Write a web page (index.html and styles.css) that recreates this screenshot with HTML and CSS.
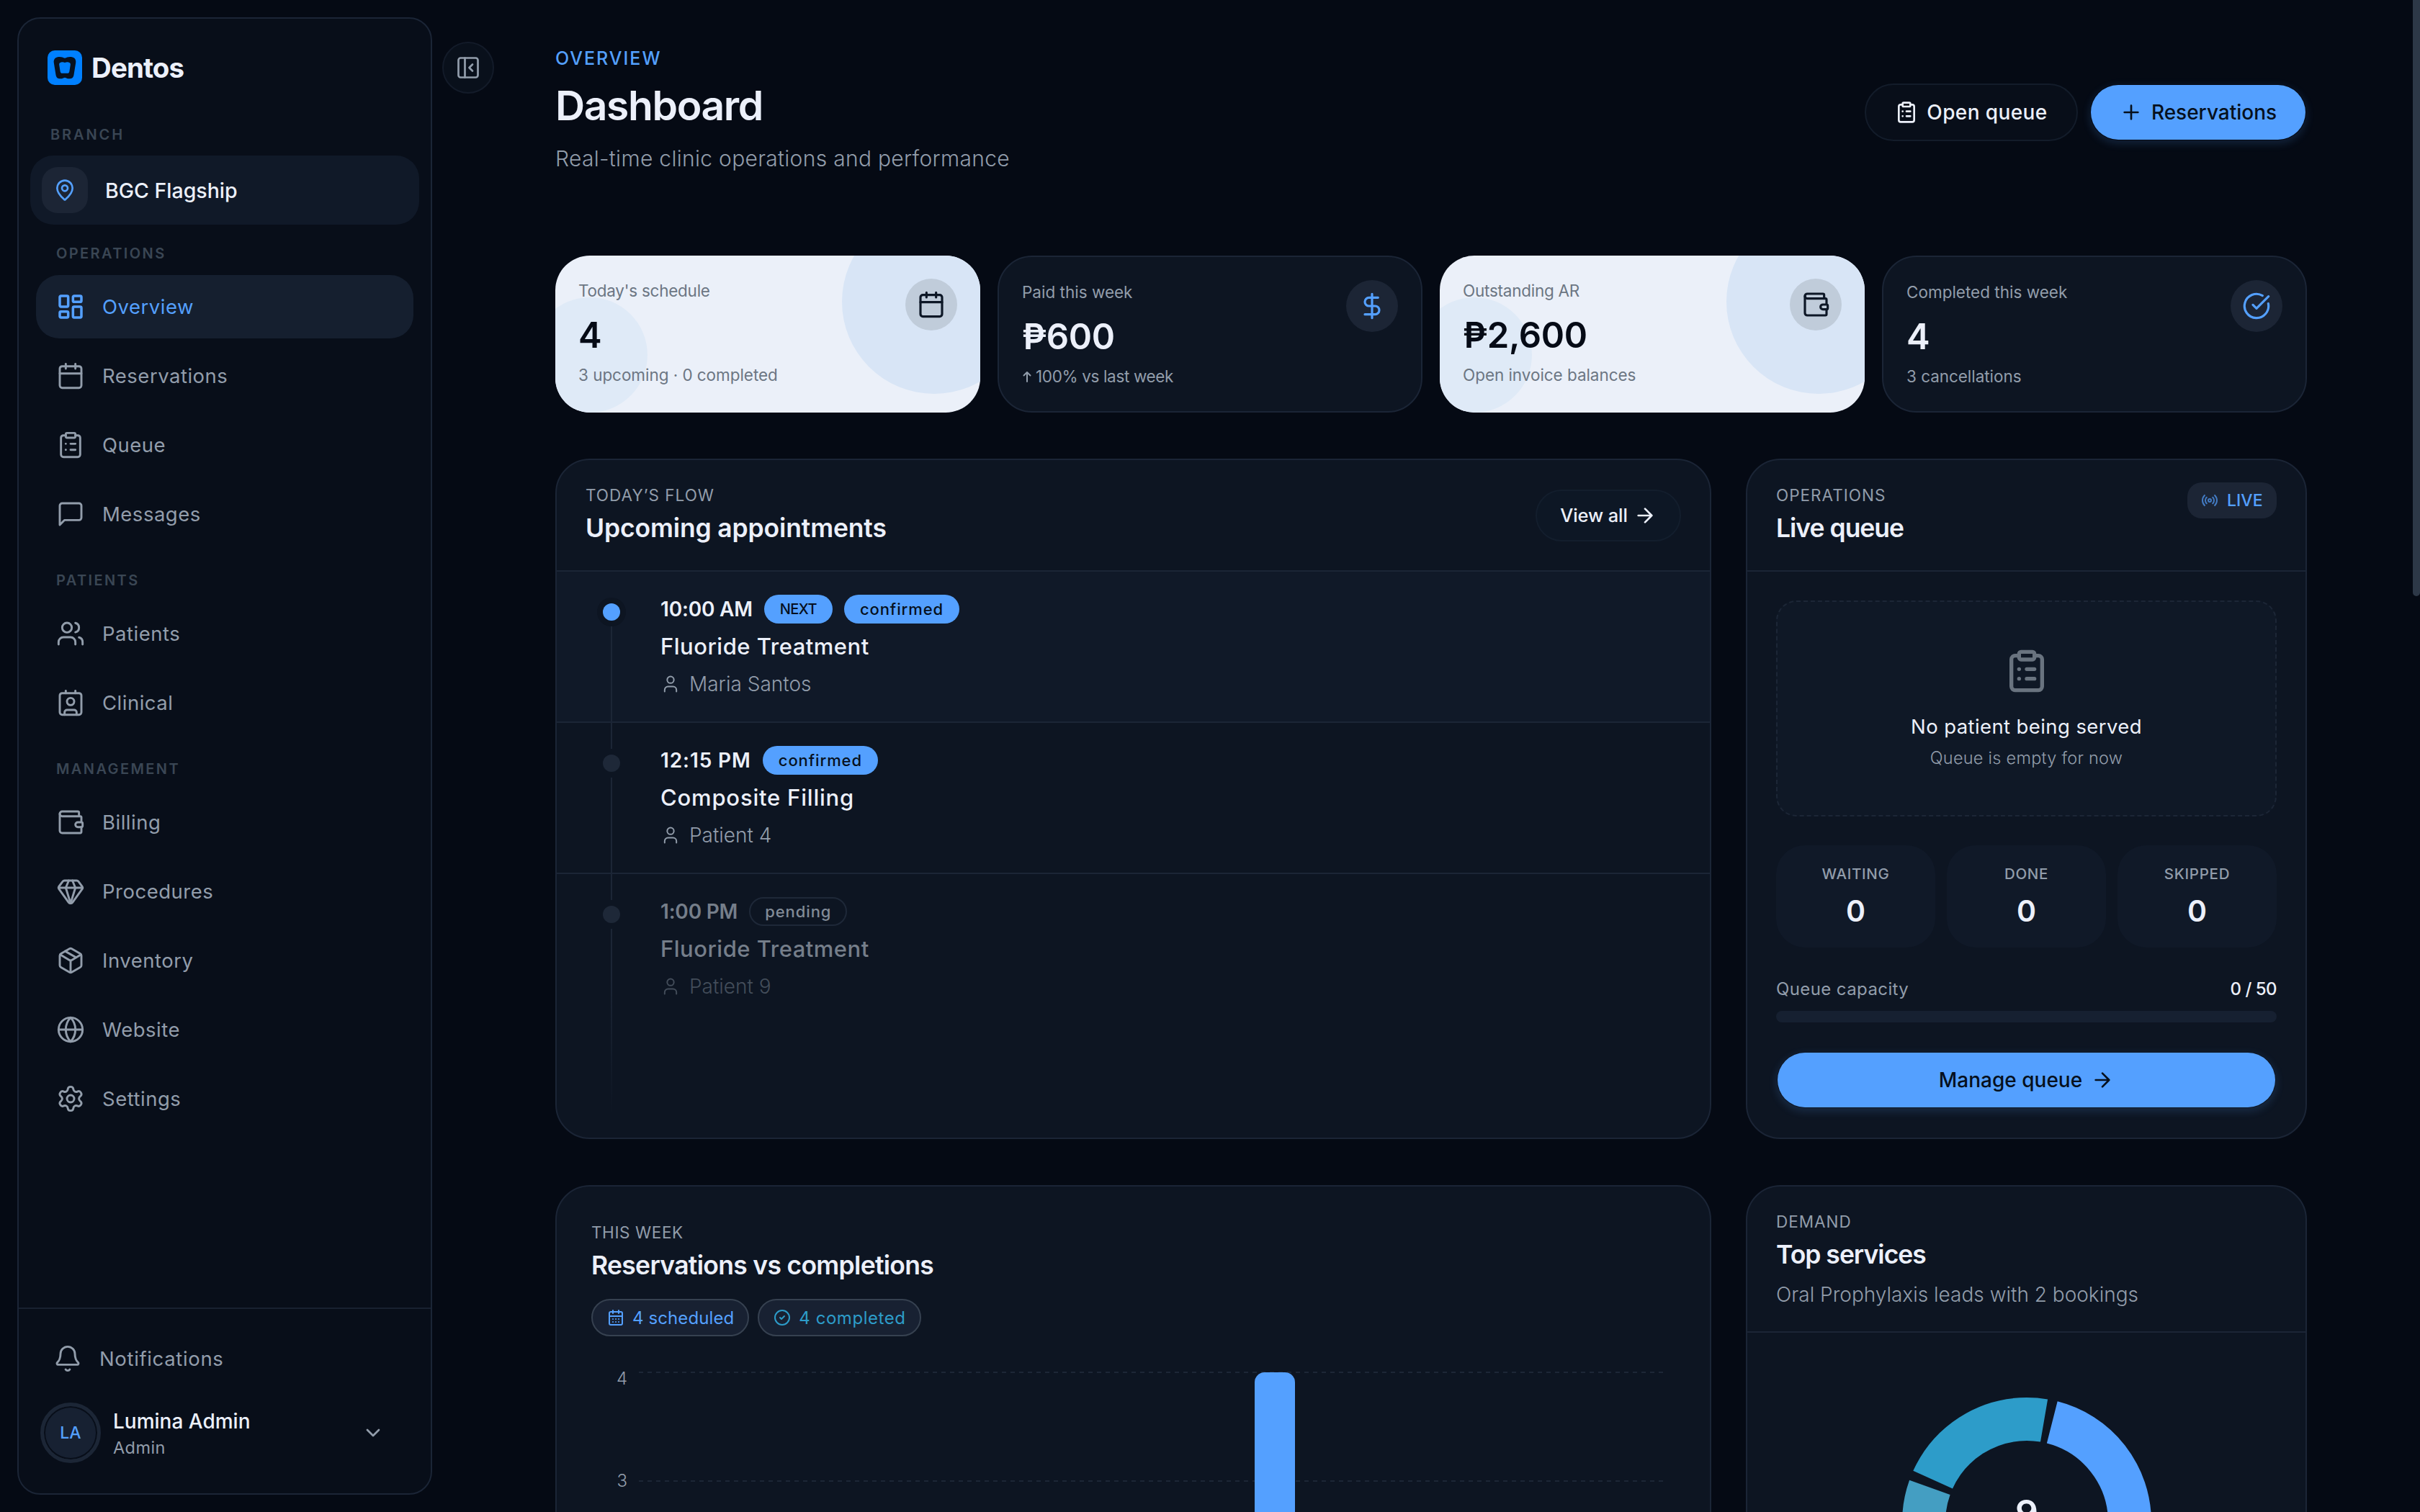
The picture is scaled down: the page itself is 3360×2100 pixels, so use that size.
FILE: index.html
```html
<!DOCTYPE html>
<html lang="en">
<head>
    <meta charset="UTF-8">
    <meta name="viewport" content="width=device-width, initial-scale=1.0">
    <title>Dentos - Dashboard</title>
    <link rel="stylesheet" href="styles.css">
</head>
<body>
    <!-- Icon sprite -->
    <svg class="sprite" aria-hidden="true">
        <symbol id="i-dashboard" viewBox="0 0 24 24"><rect x="3" y="3" width="7" height="9" rx="1"/><rect x="14" y="3" width="7" height="5" rx="1"/><rect x="14" y="12" width="7" height="9" rx="1"/><rect x="3" y="16" width="7" height="5" rx="1"/></symbol>
        <symbol id="i-calendar" viewBox="0 0 24 24"><path d="M8 2v4M16 2v4M3 10h18"/><rect x="3" y="4" width="18" height="18" rx="2"/></symbol>
        <symbol id="i-calendar-days" viewBox="0 0 24 24"><path d="M8 2v4M16 2v4M3 10h18M8 14h.01M12 14h.01M16 14h.01M8 18h.01M12 18h.01M16 18h.01"/><rect x="3" y="4" width="18" height="18" rx="2"/></symbol>
        <symbol id="i-clipboard" viewBox="0 0 24 24"><rect x="8" y="2" width="8" height="4" rx="1"/><path d="M16 4h2a2 2 0 0 1 2 2v14a2 2 0 0 1-2 2H6a2 2 0 0 1-2-2V6a2 2 0 0 1 2-2h2M12 11h4M12 16h4M8 11h.01M8 16h.01"/></symbol>
        <symbol id="i-message" viewBox="0 0 24 24"><path d="M21 15a2 2 0 0 1-2 2H7l-4 4V5a2 2 0 0 1 2-2h14a2 2 0 0 1 2 2z"/></symbol>
        <symbol id="i-users" viewBox="0 0 24 24"><path d="M16 21v-2a4 4 0 0 0-4-4H6a4 4 0 0 0-4 4v2M22 21v-2a4 4 0 0 0-3-3.87M16 3.13a4 4 0 0 1 0 7.75"/><circle cx="9" cy="7" r="4"/></symbol>
        <symbol id="i-contact" viewBox="0 0 24 24"><path d="M16 2v2M7 22v-2a2 2 0 0 1 2-2h6a2 2 0 0 1 2 2v2M8 2v2"/><circle cx="12" cy="11" r="3"/><rect x="3" y="4" width="18" height="18" rx="2"/></symbol>
        <symbol id="i-wallet" viewBox="0 0 24 24"><path d="M19 7V4a1 1 0 0 0-1-1H5a2 2 0 0 0 0 4h15a1 1 0 0 1 1 1v4h-3a2 2 0 0 0 0 4h3a1 1 0 0 0 1-1v-2a1 1 0 0 0-1-1"/><path d="M3 5v14a2 2 0 0 0 2 2h15a1 1 0 0 0 1-1v-4"/></symbol>
        <symbol id="i-gem" viewBox="0 0 24 24"><path d="M10.5 3 8 9l4 13 4-13-2.5-6"/><path d="M17 3a2 2 0 0 1 1.6.8l3 4a2 2 0 0 1 .013 2.382l-7.99 10.986a2 2 0 0 1-3.247 0l-7.99-10.986A2 2 0 0 1 2.4 7.8l2.998-3.997A2 2 0 0 1 7 3zM2 9h20"/></symbol>
        <symbol id="i-package" viewBox="0 0 24 24"><path d="M11 21.73a2 2 0 0 0 2 0l7-4A2 2 0 0 0 21 16V8a2 2 0 0 0-1-1.73l-7-4a2 2 0 0 0-2 0l-7 4A2 2 0 0 0 3 8v8a2 2 0 0 0 1 1.73zM12 22V12"/><path d="m3.3 7 7.703 4.734a2 2 0 0 0 1.994 0L20.7 7M7.5 4.27l9 5.15"/></symbol>
        <symbol id="i-globe" viewBox="0 0 24 24"><circle cx="12" cy="12" r="10"/><path d="M12 2a14.5 14.5 0 0 0 0 20 14.5 14.5 0 0 0 0-20M2 12h20"/></symbol>
        <symbol id="i-settings" viewBox="0 0 24 24"><path d="M9.671 4.136a2.34 2.34 0 0 1 4.659 0 2.34 2.34 0 0 0 3.319 1.915 2.34 2.34 0 0 1 2.33 4.033 2.34 2.34 0 0 0 0 3.831 2.34 2.34 0 0 1-2.33 4.033 2.34 2.34 0 0 0-3.319 1.915 2.34 2.34 0 0 1-4.659 0 2.34 2.34 0 0 0-3.32-1.915 2.34 2.34 0 0 1-2.33-4.033 2.34 2.34 0 0 0 0-3.831A2.34 2.34 0 0 1 6.35 6.051a2.34 2.34 0 0 0 3.319-1.915"/><circle cx="12" cy="12" r="3"/></symbol>
        <symbol id="i-bell" viewBox="0 0 24 24"><path d="M10.268 21a2 2 0 0 0 3.464 0M3.262 15.326A1 1 0 0 0 4 17h16a1 1 0 0 0 .74-1.673C19.41 13.956 18 12.499 18 8A6 6 0 0 0 6 8c0 4.499-1.411 5.956-2.738 7.326"/></symbol>
        <symbol id="i-pin" viewBox="0 0 24 24"><path d="M20 10c0 4.993-5.539 10.193-7.399 11.799a1 1 0 0 1-1.202 0C9.539 20.193 4 14.993 4 10a8 8 0 0 1 16 0"/><circle cx="12" cy="10" r="3"/></symbol>
        <symbol id="i-chevron" viewBox="0 0 24 24"><path d="m6 9 6 6 6-6"/></symbol>
        <symbol id="i-panel" viewBox="0 0 24 24"><rect x="3" y="3" width="18" height="18" rx="2"/><path d="M9 3v18M16 15l-3-3 3-3"/></symbol>
        <symbol id="i-plus" viewBox="0 0 24 24"><path d="M5 12h14M12 5v14"/></symbol>
        <symbol id="i-dollar" viewBox="0 0 24 24"><path d="M12 2v20M17 5H9.5a3.5 3.5 0 0 0 0 7h5a3.5 3.5 0 0 1 0 7H6"/></symbol>
        <symbol id="i-check-big" viewBox="0 0 24 24"><path d="M21.801 10A10 10 0 1 1 17 3.335M9 11l3 3L22 4"/></symbol>
        <symbol id="i-check" viewBox="0 0 24 24"><circle cx="12" cy="12" r="10"/><path d="m9 12 2 2 4-4"/></symbol>
        <symbol id="i-arrow" viewBox="0 0 24 24"><path d="M5 12h14M12 5l7 7-7 7"/></symbol>
        <symbol id="i-user" viewBox="0 0 24 24"><path d="M19 21v-2a4 4 0 0 0-4-4H9a4 4 0 0 0-4 4v2"/><circle cx="12" cy="7" r="4"/></symbol>
        <symbol id="i-radio" viewBox="0 0 24 24"><path d="M16.247 7.761a6 6 0 0 1 0 8.478M19.075 4.933a10 10 0 0 1 0 14.134M4.925 19.067a10 10 0 0 1 0-14.134M7.753 16.239a6 6 0 0 1 0-8.478"/><circle cx="12" cy="12" r="2"/></symbol>
    </svg>

    <div class="app">
        <aside class="sidebar">
            <div class="brand">
                <svg class="brand-mark" viewBox="0 0 48 48">
                    <rect width="48" height="48" rx="10" fill="#0080ff"/>
                    <path d="M14 9.2c4-.8 7 .2 10 1.6 3-1.4 6-2.4 10-1.6 4 .8 5.800 4 5.200 8L36.500 34c-.8 4-2.500 5.300-6.500 5.300-3 0-3.500-1-6-1.600-2.500.6-3 1.600-6 1.600-4 0-5.700-1.300-6.500-5.300L8.800 17.200c-.6-4 1.200-7.200 5.200-8z" fill="#07111f"/>
                    <path d="M19 16.500c2-.6 3.500 0 5 .5 1.500-.5 3-1.100 5-.5 2.300.4 3.100 1.500 2.800 3.500l-1.400 9c-.3 2-1.200 2.800-3.200 2.800h-6.400c-2 0-2.900-.8-3.200-2.800l-1.400-9c-.3-2 .5-3.100 2.800-3.500z" fill="#0080ff"/>
                </svg>
                <span class="brand-name">Dentos</span>
            </div>

            <div class="branch-label">Branch</div>
            <div class="branch">
                <span class="branch-icon"><svg class="icon"><use href="#i-pin"/></svg></span>
                <span class="branch-name">BGC Flagship</span>
            </div>

            <nav>
                <div class="nav-group">
                    <div class="nav-label">Operations</div>
                    <a class="nav-item active"><svg class="icon"><use href="#i-dashboard"/></svg>Overview</a>
                    <a class="nav-item"><svg class="icon"><use href="#i-calendar"/></svg>Reservations</a>
                    <a class="nav-item"><svg class="icon"><use href="#i-clipboard"/></svg>Queue</a>
                    <a class="nav-item"><svg class="icon"><use href="#i-message"/></svg>Messages</a>
                </div>
                <div class="nav-group">
                    <div class="nav-label">Patients</div>
                    <a class="nav-item"><svg class="icon"><use href="#i-users"/></svg>Patients</a>
                    <a class="nav-item"><svg class="icon"><use href="#i-contact"/></svg>Clinical</a>
                </div>
                <div class="nav-group">
                    <div class="nav-label">Management</div>
                    <a class="nav-item"><svg class="icon"><use href="#i-wallet"/></svg>Billing</a>
                    <a class="nav-item"><svg class="icon"><use href="#i-gem"/></svg>Procedures</a>
                    <a class="nav-item"><svg class="icon"><use href="#i-package"/></svg>Inventory</a>
                    <a class="nav-item"><svg class="icon"><use href="#i-globe"/></svg>Website</a>
                    <a class="nav-item"><svg class="icon"><use href="#i-settings"/></svg>Settings</a>
                </div>
            </nav>

            <div class="sidebar-footer">
                <a class="nav-item notifications"><svg class="icon"><use href="#i-bell"/></svg>Notifications</a>
                <div class="profile">
                    <span class="avatar">LA</span>
                    <div class="profile-text">
                        <div class="profile-name">Lumina Admin</div>
                        <div class="profile-role">Admin</div>
                    </div>
                    <svg class="icon chevron"><use href="#i-chevron"/></svg>
                </div>
            </div>
        </aside>

        <button class="sidebar-toggle"><svg class="icon"><use href="#i-panel"/></svg></button>

        <main class="main">
            <header class="page-header">
                <div>
                    <div class="eyebrow">Overview</div>
                    <h1>Dashboard</h1>
                    <p class="lead">Real-time clinic operations and performance</p>
                </div>
                <div class="actions">
                    <button class="btn btn-outline"><svg class="icon"><use href="#i-clipboard"/></svg>Open queue</button>
                    <button class="btn btn-primary"><svg class="icon"><use href="#i-plus"/></svg>Reservations</button>
                </div>
            </header>

            <!-- Stat cards -->
            <section class="stats">
                <div class="stat stat-light">
                    <div class="stat-label">Today's schedule</div>
                    <div class="stat-value">4</div>
                    <div class="stat-foot">3 upcoming · 0 completed</div>
                    <span class="stat-icon"><svg class="icon"><use href="#i-calendar"/></svg></span>
                </div>
                <div class="stat">
                    <div class="stat-label">Paid this week</div>
                    <div class="stat-value">₱600</div>
                    <div class="stat-foot trend"><svg class="icon up" viewBox="0 0 14 20"><path d="M7 17V4M2.500 8.500 7 4l4.500 4.500"/></svg>100% vs last week</div>
                    <span class="stat-icon"><svg class="icon"><use href="#i-dollar"/></svg></span>
                </div>
                <div class="stat stat-light">
                    <div class="stat-label">Outstanding AR</div>
                    <div class="stat-value">₱2,600</div>
                    <div class="stat-foot">Open invoice balances</div>
                    <span class="stat-icon"><svg class="icon"><use href="#i-wallet"/></svg></span>
                </div>
                <div class="stat">
                    <div class="stat-label">Completed this week</div>
                    <div class="stat-value">4</div>
                    <div class="stat-foot">3 cancellations</div>
                    <span class="stat-icon"><svg class="icon"><use href="#i-check-big"/></svg></span>
                </div>
            </section>

            <div class="grid">
                <!-- Appointments -->
                <section class="panel">
                    <div class="panel-header">
                        <div class="panel-heading">
                            <div class="panel-label">Today’s flow</div>
                            <h2 class="wide">Upcoming appointments</h2>
                        </div>
                        <button class="btn-small">View all<svg class="icon"><use href="#i-arrow"/></svg></button>
                    </div>
                    <div class="appt next">
                        <div class="rail"><span class="line top"></span><span class="dot"></span><span class="line"></span></div>
                        <div class="appt-body">
                            <div class="appt-time">10:00 AM <span class="badge badge-next">NEXT</span><span class="badge">confirmed</span></div>
                            <div class="appt-service">Fluoride Treatment</div>
                            <div class="appt-patient"><svg class="icon"><use href="#i-user"/></svg>Maria Santos</div>
                        </div>
                    </div>
                    <div class="appt">
                        <div class="rail"><span class="line top"></span><span class="dot"></span><span class="line"></span></div>
                        <div class="appt-body">
                            <div class="appt-time"><span class="loose">12:15 PM</span> <span class="badge">confirmed</span></div>
                            <div class="appt-service loose">Composite Filling</div>
                            <div class="appt-patient"><svg class="icon"><use href="#i-user"/></svg>Patient 4</div>
                        </div>
                    </div>
                    <div class="appt fading">
                        <div class="rail"><span class="line top"></span><span class="dot"></span><span class="line"></span></div>
                        <div class="appt-body">
                            <div class="appt-time">1:00 PM <span class="badge badge-pending">pending</span></div>
                            <div class="appt-service">Fluoride Treatment</div>
                            <div class="appt-patient"><svg class="icon"><use href="#i-user"/></svg>Patient 9</div>
                        </div>
                    </div>
                </section>

                <!-- Queue -->
                <section class="panel">
                    <div class="panel-header">
                        <div class="panel-heading">
                            <div class="panel-label">Operations</div>
                            <h2>Live queue</h2>
                        </div>
                        <span class="live"><svg class="icon"><use href="#i-radio"/></svg>LIVE</span>
                    </div>
                    <div class="queue">
                        <div class="queue-empty">
                            <svg class="icon"><use href="#i-clipboard"/></svg>
                            <div class="queue-empty-title">No patient being served</div>
                            <div class="queue-empty-text">Queue is empty for now</div>
                        </div>
                        <div class="queue-stats">
                            <div class="queue-stat"><span>Waiting</span><b>0</b></div>
                            <div class="queue-stat"><span>Done</span><b>0</b></div>
                            <div class="queue-stat"><span>Skipped</span><b>0</b></div>
                        </div>
                        <div class="capacity"><span>Queue capacity</span><b>0 / 50</b></div>
                        <div class="capacity-bar"></div>
                        <button class="btn btn-primary btn-block">Manage queue<svg class="icon"><use href="#i-arrow"/></svg></button>
                    </div>
                </section>

                <!-- Weekly chart -->
                <section class="panel panel-chart">
                    <div class="panel-label week">This week</div>
                    <h2 class="chart-title">Reservations vs completions</h2>
                    <div class="pills">
                        <span class="pill"><svg class="icon"><use href="#i-calendar-days"/></svg>4 scheduled</span>
                        <span class="pill pill-teal"><svg class="icon"><use href="#i-check"/></svg>4 completed</span>
                    </div>
                    <svg class="chart" viewBox="0 0 1505 640">
                        <path class="gridline" d="M66 16H1489M66 167H1489M66 318H1489M66 469H1489"/>
                        <path class="bar" d="M921 640V30a14 14 0 0 1 14-14h28a14 14 0 0 1 14 14V640z"/>
                        <text class="tick" x="50" y="33">4</text>
                        <text class="tick" x="50" y="175">3</text>
                    </svg>
                </section>

                <!-- Top services -->
                <section class="panel">
                    <div class="panel-header services-header">
                        <div>
                            <div class="panel-label">Demand</div>
                            <h2>Top services</h2>
                            <p class="services-lead">Oral Prophylaxis leads with 2 bookings</p>
                        </div>
                    </div>
                    <div class="donut-wrap">
                        <svg class="donut" viewBox="0 0 346 346">
                            <g fill="none" stroke-width="60" transform="rotate(-90 173 173)">
                                <circle cx="173" cy="173" r="143" pathLength="360" stroke="#54a0ff" stroke-dasharray="75.4 284.6" stroke-dashoffset="-14.3"/>
                                <circle cx="173" cy="173" r="143" pathLength="360" stroke="#2d9cc9" stroke-dasharray="75.4 284.6" stroke-dashoffset="-294.3"/>
                                <circle cx="173" cy="173" r="143" pathLength="360" stroke="#449ec2" stroke-dasharray="35.400 324.600" stroke-dashoffset="-254.300"/>
                            </g>
                            <text class="donut-total" x="173" y="178">9</text>
                        </svg>
                    </div>
                </section>
            </div>
        </main>
    </div>
    <div class="scrollbar"></div>
</body>
</html>
```
FILE: styles.css
```css
* {
    margin: 0;
    padding: 0;
    box-sizing: border-box;
}

html,
body {
    height: 2100px;
    overflow: hidden;
}

body {
    font-family: Inter, "Liberation Sans", sans-serif;
    background: #050a14;
    color: #ecf0fa;
}

button {
    font-family: inherit;
    color: inherit;
    border: none;
    background: none;
}

.sprite {
    position: absolute;
    width: 0;
    height: 0;
}

.icon {
    width: 32px;
    height: 32px;
    flex-shrink: 0;
    fill: none;
    stroke: currentColor;
    stroke-width: 2;
    stroke-linecap: round;
    stroke-linejoin: round;
}

.app {
    display: flex;
    align-items: flex-start;
    height: 2100px;
    overflow: hidden;
}

/* Sidebar */
.sidebar {
    display: flex;
    flex-direction: column;
    flex-shrink: 0;
    width: 576px;
    height: 2052px;
    margin: 24px 0 0 24px;
    background: #080e19;
    border: 2px solid #1b2536;
    border-radius: 32px;
}

.brand {
    display: flex;
    align-items: center;
    gap: 13px;
    padding: 44px 40px 0;
}

.brand-mark {
    width: 48px;
    height: 48px;
}

.brand-name {
    font-size: 38.5px;
    font-weight: 700;
    line-height: 48px;
    letter-spacing: -0.9px;
}

.branch-label,
.nav-label {
    font-size: 20px;
    font-weight: 600;
    line-height: 30px;
    letter-spacing: 2.4px;
    text-transform: uppercase;
    color: #3a4654;
}

.branch-label {
    margin: 54px 0 14px 44px;
    letter-spacing: 2.9px;
}

.branch {
    display: flex;
    align-items: center;
    gap: 24px;
    height: 96px;
    margin: 0 16px;
    padding: 0 16px;
    background: #101928;
    border-radius: 32px;
}

.branch-icon {
    display: flex;
    align-items: center;
    justify-content: center;
    width: 64px;
    height: 64px;
    background: #1c2535;
    border-radius: 22px;
    color: #54a0ff;
}

.branch-name {
    font-size: 28.5px;
    font-weight: 500;
}

nav {
    padding: 25px 24px 0;
}

.nav-group + .nav-group {
    margin-top: 33px;
}

.nav-label {
    margin: 0 0 15px 28px;
}

.nav-item {
    display: flex;
    align-items: center;
    gap: 24px;
    height: 88px;
    padding: 0 28px;
    border-radius: 32px;
    font-size: 27.5px;
    letter-spacing: 0.5px;
    color: #929dab;
}

.nav-item + .nav-item {
    margin-top: 8px;
}

.nav-item .icon {
    width: 40px;
    height: 40px;
    stroke-width: 1.75;
}

.nav-item.active {
    background: #151f2f;
    color: #54a0ff;
}

.nav-item.active .icon {
    stroke-width: 2.1;
}

.sidebar-footer {
    height: 258px;
    margin-top: auto;
    padding: 25px 24px 0;
    border-top: 2px solid #182130;
}

.notifications {
    padding: 0 24px;
    letter-spacing: 0.65px;
}

.profile {
    display: flex;
    align-items: center;
    margin-top: 17px;
    padding: 0 40px 0 6px;
}

.avatar {
    display: flex;
    align-items: center;
    justify-content: center;
    width: 84px;
    height: 84px;
    border: 5px solid #1c2636;
    border-radius: 50%;
    background: #172132;
    box-shadow: inset 0 0 0 2px #080e19;
    font-size: 23px;
    font-weight: 500;
    color: #54a0ff;
}

.profile-text {
    margin: 5px 0 0 17px;
}

.profile-name {
    font-size: 28px;
    font-weight: 500;
    line-height: 36px;
}

.profile-role {
    font-size: 23.5px;
    line-height: 37px;
    color: #929dab;
    letter-spacing: 0.4px;
}

.chevron {
    margin-left: auto;
    color: #929dab;
}

.sidebar-toggle {
    display: flex;
    align-items: center;
    justify-content: center;
    flex-shrink: 0;
    width: 72px;
    height: 72px;
    margin: 58px 0 0 14px;
    background: #09101b;
    border: 2px solid #131b29;
    border-radius: 50%;
    color: #929dab;
}

.sidebar-toggle .icon {
    width: 36px;
    height: 36px;
    stroke-width: 1.8;
}

/* Main column */
.main {
    width: 2432px;
    margin-left: 85px;
}

.page-header {
    display: flex;
    justify-content: space-between;
    height: 355px;
    padding-top: 61px;
}

.eyebrow {
    font-size: 25px;
    font-weight: 500;
    line-height: 40px;
    letter-spacing: 2px;
    text-transform: uppercase;
    color: #54a0ff;
}

h1 {
    margin-top: 8px;
    font-size: 57px;
    font-weight: 600;
    line-height: 76px;
    letter-spacing: -1.4px;
}

.lead {
    margin-top: 13px;
    font-size: 30px;
    font-weight: 300;
    line-height: 44px;
    letter-spacing: 0.3px;
    color: #929dab;
}

.actions {
    display: flex;
    gap: 16px;
    height: 80px;
    margin-top: 55px;
}

.btn {
    display: flex;
    align-items: center;
    justify-content: center;
    gap: 12px;
    height: 80px;
    border-radius: 40px;
    font-size: 28px;
    font-weight: 500;
    white-space: nowrap;
}

.btn-outline {
    width: 296px;
    background: #080e19;
    border: 2px solid #131c2a;
    letter-spacing: 0.4px;
}

.btn-primary {
    width: 302px;
    background: #54a0ff;
    background-clip: padding-box;
    border: 2px solid transparent;
    box-shadow: 0 4px 12px rgba(84, 160, 255, 0.16);
    color: #06101d;
}

.btn-block {
    width: 100%;
    margin-top: 40px;
}

/* Stat cards */
.stats {
    display: grid;
    grid-template-columns: repeat(4, 1fr);
    gap: 24px;
}

.stat {
    position: relative;
    height: 218px;
    padding: 32px;
    overflow: hidden;
    background: #0d1522;
    border: 2px solid #1b2536;
    border-radius: 48px;
    color: #929dab;
}

.stat-light {
    background: #ebf0f9;
    border: none;
    color: #6c7683;
}

/* Soft circles behind the light cards */
.stat-light::before,
.stat-light::after {
    content: '';
    position: absolute;
    border-radius: 50%;
}

.stat-light::before {
    top: -64px;
    right: -64px;
    width: 256px;
    height: 256px;
    background: #d8e5f6;
}

.stat-light::after {
    bottom: 0;
    left: -32px;
    width: 160px;
    height: 160px;
    background: #dfeaf7;
}

.stat > * {
    position: relative;
    z-index: 1;
}

.stat-label {
    font-size: 22.5px;
    line-height: 34px;
}

.stat-light .stat-label {
    letter-spacing: -0.25px;
}

.stat-value {
    margin-top: 15px;
    font-size: 49px;
    font-weight: 600;
    line-height: 60px;
    letter-spacing: -0.4px;
    color: #ecf0fa;
}

.stat-light .stat-value {
    color: #060b16;
}

.stat-foot {
    display: flex;
    align-items: center;
    margin-top: 10px;
    font-size: 22.5px;
    line-height: 30px;
    letter-spacing: -0.05px;
}

.stat-foot.trend {
    letter-spacing: -0.35px;
}

.up {
    width: 14px;
    height: 20px;
    margin-right: 5px;
}

.stat .stat-icon {
    position: absolute;
    top: 32px;
    right: 32px;
    display: flex;
    align-items: center;
    justify-content: center;
    width: 72px;
    height: 72px;
    background: #1c2535;
    border-radius: 50%;
    color: #54a0ff;
}

.stat-light .stat-icon {
    background: #c0ccda;
    color: #0d1726;
}

.stat-icon .icon {
    width: 40px;
    height: 40px;
    stroke-width: 1.9;
}

/* Panels */
.grid {
    display: grid;
    grid-template-columns: 1605px 779px;
    grid-template-rows: 945px 900px;
    gap: 64px 48px;
    margin-top: 64px;
}

.panel {
    display: flex;
    flex-direction: column;
    overflow: hidden;
    background: #0d1522;
    border: 2px solid #1b2536;
    border-radius: 48px;
}

.panel-header {
    display: flex;
    align-items: center;
    justify-content: space-between;
    flex-shrink: 0;
    height: 155px;
    padding: 0 40px;
    border-bottom: 2px solid #1b2536;
}

.panel-heading {
    padding-bottom: 4px;
}

.panel-label {
    font-size: 22.5px;
    line-height: 34px;
    letter-spacing: 1px;
    text-transform: uppercase;
    color: #929dab;
}

.panel-label.week {
    letter-spacing: 0.6px;
}

h2 {
    margin-top: 7px;
    font-size: 35.5px;
    font-weight: 600;
    line-height: 44px;
    letter-spacing: -1px;
}

h2.wide {
    letter-spacing: -0.15px;
}

h2.chart-title {
    letter-spacing: -0.7px;
}

.btn-small {
    display: flex;
    align-items: center;
    justify-content: center;
    gap: 8px;
    width: 202px;
    height: 72px;
    background: #0d1725;
    border: 2px solid #131e2d;
    border-radius: 36px;
    font-size: 25.5px;
    font-weight: 500;
    letter-spacing: -0.1px;
}

/* Appointments */
.appt {
    display: flex;
    gap: 32px;
    height: 210px;
    flex-shrink: 0;
    padding: 0 40px;
    border-bottom: 2px solid #1b2536;
}

.appt.next {
    background: #101928;
}

.rail {
    display: flex;
    flex-direction: column;
    align-items: center;
    width: 72px;
}

.line {
    flex: 1;
    width: 2px;
    background: #1c2636;
}

.line.top {
    flex: none;
    height: 36px;
}

.next .line.top {
    visibility: hidden;
}

.dot {
    width: 24px;
    height: 24px;
    margin: 8px 0;
    background: #1e2838;
    border-radius: 50%;
}

.next .dot {
    background: #54a0ff;
    box-shadow: 0 0 0 8px #0d1522;
}

.appt-body {
    padding-top: 32px;
}

.appt-time {
    display: flex;
    align-items: center;
    gap: 16px;
    height: 40px;
    font-size: 28px;
    font-weight: 600;
    letter-spacing: -0.2px;
}

.appt-time .loose {
    letter-spacing: 0.9px;
}

.badge {
    display: flex;
    align-items: center;
    height: 40px;
    padding: 0 22px;
    background: #54a0ff;
    border-radius: 20px;
    font-size: 22px;
    font-weight: 500;
    letter-spacing: 0.9px;
    color: #06101d;
}

.badge-next {
    font-size: 20px;
    letter-spacing: -0.6px;
}

.badge-pending {
    padding: 0 20px;
    background: none;
    border: 2px solid #1e2838;
    color: #818b97;
}

.appt-service {
    margin-top: 10px;
    font-size: 31px;
    font-weight: 500;
    line-height: 44px;
    letter-spacing: 0.5px;
}

.appt-service.loose {
    letter-spacing: 0.8px;
}

.appt-patient {
    display: flex;
    align-items: center;
    gap: 12px;
    margin-top: 12px;
    font-size: 28px;
    font-weight: 300;
    line-height: 36px;
    color: #929dab;
}

.appt-patient .icon {
    width: 28px;
    height: 28px;
    stroke-width: 1.7;
}

/* Last visible row fades into the card */
.fading {
    flex: 1;
    border-bottom: none;
}

.fading .appt-time,
.fading .appt-service {
    color: #757e8a;
}

.fading .appt-patient {
    color: #434d5a;
}

.fading .line:last-child {
    margin-bottom: 32px;
    background: linear-gradient(#1c2636 25%, rgba(28, 38, 54, 0));
}

/* Live queue */
.live {
    display: flex;
    align-items: center;
    align-self: flex-start;
    gap: 12px;
    height: 50px;
    margin-top: 31px;
    padding: 0 19.5px;
    background: #1c2535;
    border-radius: 20px;
    font-size: 23px;
    font-weight: 500;
    color: #54a0ff;
}

.live .icon {
    width: 24px;
    height: 24px;
    opacity: 0.7;
}

.queue {
    padding: 40px;
}

.queue-empty {
    display: flex;
    flex-direction: column;
    align-items: center;
    height: 300px;
    padding-top: 64px;
    background: #0f1826;
    border: 2px dashed #1c2636;
    border-radius: 28px;
}

.queue-empty .icon {
    width: 64px;
    height: 64px;
    color: #69737f;
}

.queue-empty-title {
    margin-top: 25px;
    font-size: 27.5px;
    line-height: 40px;
    letter-spacing: 0.4px;
}

.queue-empty-text {
    margin-top: 8px;
    font-size: 23.5px;
    font-weight: 300;
    line-height: 32px;
    letter-spacing: 0.25px;
    color: #929dab;
}

.queue-stats {
    display: grid;
    grid-template-columns: repeat(3, 1fr);
    gap: 16px;
    margin-top: 40px;
}

.queue-stat {
    display: flex;
    flex-direction: column;
    align-items: center;
    height: 142px;
    padding-top: 25px;
    background: #101928;
    border-radius: 40px;
}

.queue-stat span {
    font-size: 20.5px;
    font-weight: 500;
    line-height: 30px;
    letter-spacing: 0.7px;
    text-transform: uppercase;
    color: #929dab;
}

.queue-stat b {
    margin-top: 11px;
    font-size: 41px;
    font-weight: 600;
    line-height: 50px;
}

.capacity {
    display: flex;
    justify-content: space-between;
    margin: 40px 0 12px;
    font-size: 24px;
    line-height: 36px;
    letter-spacing: 0.4px;
    color: #929dab;
}

.capacity b {
    font-weight: 500;
    letter-spacing: -0.5px;
    color: #ecf0fa;
}

.capacity-bar {
    height: 16px;
    background: #162031;
    border-radius: 8px;
}

/* Weekly chart */
.panel-chart {
    padding: 47px 48px 0;
}

.pills {
    display: flex;
    gap: 12px;
    margin-top: 24px;
}

.pill {
    display: flex;
    align-items: center;
    gap: 11px;
    height: 52px;
    padding: 0 19px 0 20px;
    background: #182132;
    border: 2px solid #364150;
    border-radius: 26px;
    font-size: 24px;
    letter-spacing: 0.1px;
    color: #54a0ff;
}

.pill-teal {
    letter-spacing: 0.55px;
    color: #2d9cc9;
}

.pill .icon {
    width: 24px;
    height: 24px;
}

.chart {
    flex-shrink: 0;
    width: 1505px;
    height: 640px;
    margin-top: 34px;
}

.gridline {
    stroke: #1c2636;
    stroke-width: 2;
    stroke-dasharray: 6 6;
}

.bar {
    fill: #54a0ff;
}

.tick {
    font-size: 24px;
    font-weight: 300;
    text-anchor: end;
    fill: #929dab;
}

/* Top services */
.services-header {
    height: 203px;
    align-items: flex-start;
    padding-top: 32px;
}

.services-lead {
    margin-top: 13px;
    font-size: 28px;
    font-weight: 300;
    line-height: 40px;
    color: #929dab;
}

.donut-wrap {
    display: flex;
    justify-content: center;
    padding-top: 90px;
}

.donut {
    width: 346px;
    height: 346px;
}

.donut-total {
    font-size: 50px;
    font-weight: 600;
    text-anchor: middle;
    fill: #ecf0fa;
}

/* Page scroll thumb */
.scrollbar {
    position: absolute;
    top: 0;
    right: 0;
    width: 10px;
    height: 828px;
    background: #2d3847;
    border-radius: 0 0 6px 6px;
}
```
